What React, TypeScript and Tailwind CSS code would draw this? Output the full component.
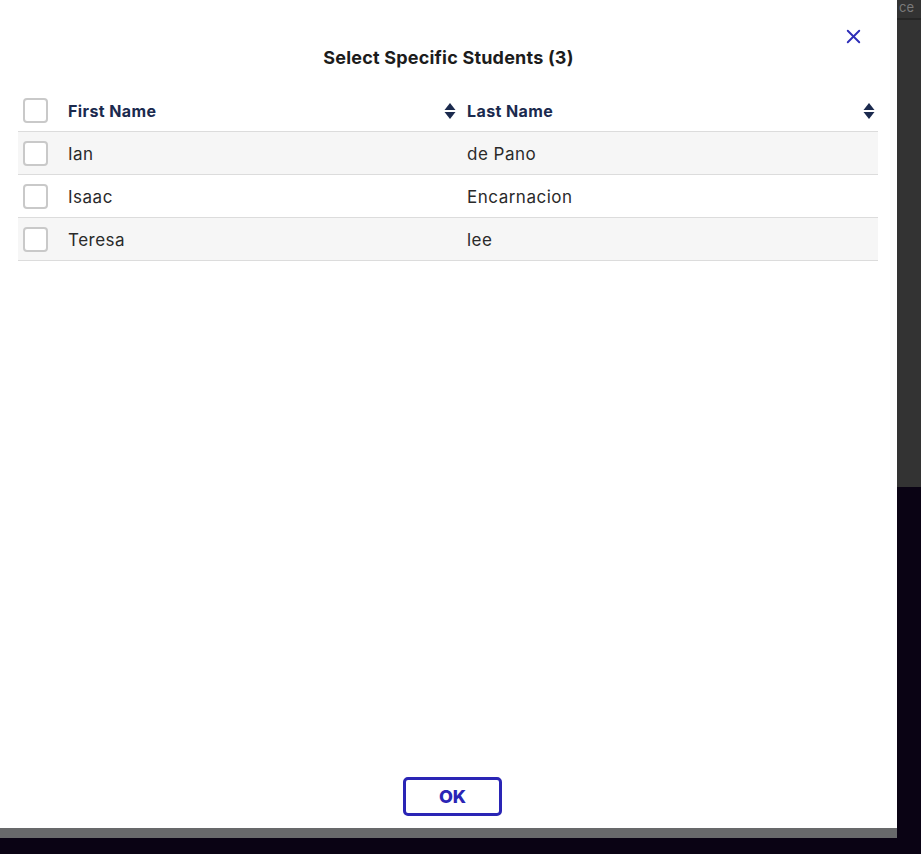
import { X } from 'lucide-react';

const students = [
  { first: 'Ian', last: 'de Pano' },
  { first: 'Isaac', last: 'Encarnacion' },
  { first: 'Teresa', last: 'lee' },
];

const SortIcon = () => (
  <svg width="12" height="18" viewBox="0 0 12 18" className="shrink-0">
    <path d="M6 1 L11.5 8 L0.5 8 Z" fill="#1b2a4e" />
    <path d="M6 17 L11.5 10 L0.5 10 Z" fill="#1b2a4e" />
  </svg>
);

const Checkbox = () => (
  <div className="w-[25px] h-[25px] rounded-[4px] border-2 border-[#c9c9c9] bg-white" />
);

const App = () => {
  return (
    <div className="w-[921px] h-[854px] flex bg-[#0a0314] overflow-hidden" style={{ fontFamily: 'Inter, "Open Sans", sans-serif' }}>
      <div className="w-[897px] flex flex-col">
        <div className="h-[828px] bg-white flex flex-col relative">
          <button className="absolute right-[32px] top-[25px] text-[#2e2eb8]">
            <X size={23} strokeWidth={2} />
          </button>
          <h2 className="pt-[45px] text-center text-[18px] font-bold text-[#1c1c1c] leading-[26px] tracking-[0.2px]">
            Select Specific Students (3)
          </h2>

          <div className="mx-[18px] mt-[19px] w-[860px]">
            <div className="flex items-center h-[42px] border-b border-[#dcdcdc]">
              <div className="w-[40px] pl-[5px] flex items-center">
                <Checkbox />
              </div>
              <div className="w-[401px] pl-[10px] pr-[3px] flex items-center justify-between">
                <span className="text-[16px] font-bold text-[#1b2a4e] tracking-[0.4px]">First Name</span>
                <SortIcon />
              </div>
              <div className="w-[419px] pl-[8px] pr-[3px] flex items-center justify-between">
                <span className="text-[16px] font-bold text-[#1b2a4e] tracking-[0.4px]">Last Name</span>
                <SortIcon />
              </div>
            </div>
            {students.map((s, i) => (
              <div
                key={s.first}
                className={`flex items-center h-[43px] border-b border-[#dcdcdc] ${i % 2 === 0 ? 'bg-[#f6f6f6]' : 'bg-white'}`}
              >
                <div className="w-[40px] pl-[5px] flex items-center">
                  <Checkbox />
                </div>
                <div className="w-[401px] pl-[10px] pt-[3px] text-[17px] text-[#2a2a2a] tracking-[0.5px]">{s.first}</div>
                <div className="w-[419px] pl-[8px] pt-[3px] text-[17px] text-[#2a2a2a] tracking-[0.5px]">{s.last}</div>
              </div>
            ))}
          </div>

          <div className="mt-auto pb-[12px] flex justify-center pl-[8px]">
            <button className="w-[99px] h-[39px] rounded-[5px] border-[3px] border-[#2a25b5] text-[#2a25b5] font-extrabold text-[18px]">
              OK
            </button>
          </div>
        </div>
        <div className="h-[10px] bg-[#68696b]" />
        <div className="flex-1 bg-[#0a0314]" />
      </div>
      <div className="flex-1 flex flex-col">
        <div className="h-[487px] bg-[#333333] flex flex-col">
          <div className="h-[18px] text-[#7a7a7a] text-[13px] leading-[15px] pl-[2px]">ce</div>
          <div className="h-[2px] bg-[#262626]" />
        </div>
        <div className="flex-1 bg-[#0a0314]" />
      </div>
    </div>
  );
};

export default App;
